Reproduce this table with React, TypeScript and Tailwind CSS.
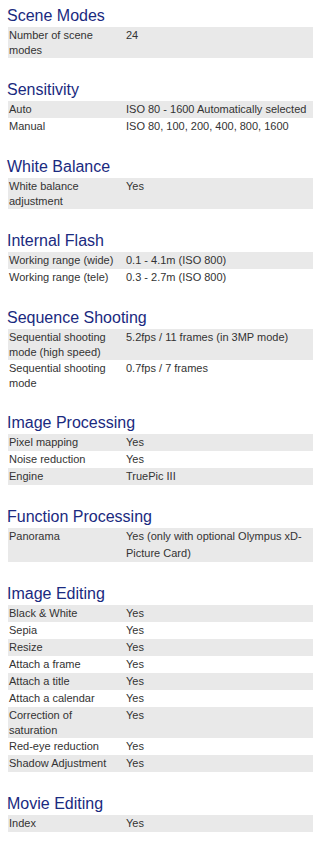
type Row = [string, string];

type Section = {
  title: string;
  rows: Row[];
};

const specs: Section[] = [
  { title: "Scene Modes", rows: [["Number of scene modes", "24"]] },
  {
    title: "Sensitivity",
    rows: [
      ["Auto", "ISO 80 - 1600 Automatically selected"],
      ["Manual", "ISO 80, 100, 200, 400, 800, 1600"],
    ],
  },
  { title: "White Balance", rows: [["White balance adjustment", "Yes"]] },
  {
    title: "Internal Flash",
    rows: [
      ["Working range (wide)", "0.1 - 4.1m (ISO 800)"],
      ["Working range (tele)", "0.3 - 2.7m (ISO 800)"],
    ],
  },
  {
    title: "Sequence Shooting",
    rows: [
      ["Sequential shooting mode (high speed)", "5.2fps / 11 frames (in 3MP mode)"],
      ["Sequential shooting mode", "0.7fps / 7 frames"],
    ],
  },
  {
    title: "Image Processing",
    rows: [
      ["Pixel mapping", "Yes"],
      ["Noise reduction", "Yes"],
      ["Engine", "TruePic III"],
    ],
  },
  {
    title: "Function Processing",
    rows: [["Panorama", "Yes (only with optional Olympus xD-Picture Card)"]],
  },
  {
    title: "Image Editing",
    rows: [
      ["Black & White", "Yes"],
      ["Sepia", "Yes"],
      ["Resize", "Yes"],
      ["Attach a frame", "Yes"],
      ["Attach a title", "Yes"],
      ["Attach a calendar", "Yes"],
      ["Correction of saturation", "Yes"],
      ["Red-eye reduction", "Yes"],
      ["Shadow Adjustment", "Yes"],
    ],
  },
  { title: "Movie Editing", rows: [["Index", "Yes"]] },
];

// striped two-column spec rows, label column fixed, value wraps
const SpecTable = ({ rows }: { rows: Row[] }) => (
  <div className="flex flex-col">
    {rows.map(([label, value], idx) => (
      <div
        key={label}
        className={`flex items-start ${idx % 2 === 0 ? "bg-[#e9e9e9]" : "bg-white"}`}
      >
        <div className="w-[118px] shrink-0 py-px pl-px pr-[7px] leading-[14.5px]">
          {label}
        </div>
        <div className="min-w-0 flex-1 leading-[17px]">{value}</div>
      </div>
    ))}
  </div>
);

const App = () => {
  return (
    <main className="min-h-screen bg-white pl-2 pr-[7px] pt-[6px] font-['Liberation_Sans',Arial,sans-serif] text-[11px] text-[#333]">
      {specs.map((section, idx) => (
        <section key={section.title} className={idx === 0 ? "" : "mt-[22px]"}>
          <h2 className="-ml-px mb-px text-[16px] leading-[20px] text-[#1a2a80]">
            {section.title}
          </h2>
          <SpecTable rows={section.rows} />
        </section>
      ))}
    </main>
  );
};

export default App;
